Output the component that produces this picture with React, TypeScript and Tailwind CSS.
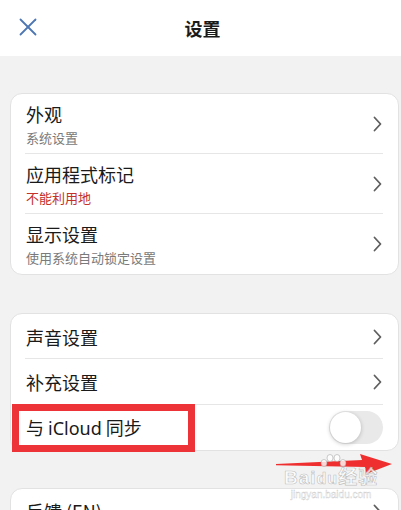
import React from "react";

const cjk = { fontFamily: '"Noto Sans CJK SC", "Noto Sans", sans-serif' };

function Chevron() {
  return (
    <svg width="9" height="16" viewBox="0 0 9 16" className="shrink-0">
      <polyline points="1.5,1.5 7.5,8 1.5,14.5" fill="none" stroke="#5f5f5f" strokeWidth="1.8" strokeLinecap="round" strokeLinejoin="round" />
    </svg>
  );
}

function Row2({ title, sub, subColor, last }: { title: string; sub: string; subColor: string; last?: boolean }) {
  return (
    <div className="relative flex h-[60px] items-center pl-[15px] pr-[16px]">
      <div className="flex flex-1 flex-col gap-[4px]">
        <div className="text-[18px] leading-[22px] text-[#1a1a1a]">{title}</div>
        <div className={`text-[13px] leading-[17px] ${subColor}`}>{sub}</div>
      </div>
      <Chevron />
      {!last && <div className="absolute bottom-0 left-[14px] right-[15px] h-px bg-[#e6e6e6]" />}
    </div>
  );
}

function Row1({ title, h }: { title: React.ReactNode; h: string }) {
  return (
    <div className={`relative flex items-center pl-[15px] pr-[16px] ${h}`}>
      <div className="flex-1 text-[18px] leading-[22px] text-[#1a1a1a]">{title}</div>
      <Chevron />
      <div className="absolute bottom-0 left-[14px] right-[15px] h-px bg-[#e6e6e6]" />
    </div>
  );
}

export default function App() {
  return (
    <div className="relative h-[510px] w-[401px] overflow-hidden bg-[#f2f2f2]" style={cjk}>
      <div className="relative flex h-[56px] items-center justify-center bg-white">
        <svg className="absolute left-[19px] top-[18px]" width="18" height="18" viewBox="0 0 18 18">
          <line x1="1.5" y1="1.5" x2="16.5" y2="16.5" stroke="#4d76b3" strokeWidth="1.8" strokeLinecap="round" />
          <line x1="16.5" y1="1.5" x2="1.5" y2="16.5" stroke="#4d76b3" strokeWidth="1.8" strokeLinecap="round" />
        </svg>
        <div className="ml-[4px] text-[18px] font-bold text-[#1a1a1a]">设置</div>
      </div>

      <div className="flex flex-col pt-[37px]">
        <div className="ml-[10px] mr-[2px] overflow-hidden rounded-[12px] border border-[#e2e2e2] bg-white">
          <Row2 title="外观" sub="系统设置" subColor="text-[#7a7a7a]" />
          <Row2 title="应用程式标记" sub="不能利用地" subColor="text-[#c4302a]" />
          <Row2 title="显示设置" sub="使用系统自动锁定设置" subColor="text-[#7a7a7a]" last />
        </div>

        <div className="ml-[10px] mr-[2px] mt-[38px] rounded-[12px] border border-[#e2e2e2] bg-white">
          <Row1 title="声音设置" h="h-[45px]" />
          <Row1 title="补充设置" h="h-[46px]" />
          <div className="relative flex h-[45px] items-center pl-[15px] pr-[15px]">
            <div className="flex-1 text-[18px] leading-[22px] text-[#1a1a1a]">
              与 <span style={{ fontFamily: '"Noto Sans", sans-serif' }}>iCloud</span> 同步
            </div>
            <div className="relative h-[33px] w-[54px] rounded-full bg-[#e9e9ea]">
              <div className="absolute left-[1px] top-[1px] h-[31px] w-[31px] rounded-full bg-white shadow-[0_1px_4px_rgba(0,0,0,0.22)]" />
            </div>
            <div className="absolute left-[1px] top-[-1px] h-[48px] w-[183px] border-[7px] border-[#ee3338]" />
          </div>
        </div>

        <div className="ml-[10px] mr-[2px] mt-[37px] rounded-[12px] border border-[#e2e2e2] bg-white">
          <div className="flex h-[46px] items-start pl-[15px] pr-[16px] pt-[11px]">
            <div className="flex-1 text-[18px] leading-[22px] text-[#1a1a1a]">反馈 (EN)</div>
            <div className="pt-[4px]">
              <Chevron />
            </div>
          </div>
        </div>
      </div>

      {/* red arrow */}
      <svg className="absolute left-[274px] top-[452px]" width="122" height="24" viewBox="0 0 122 24">
        <polygon points="2,12 88,8 86,2 118,12 92,22 91,15 2,13.2" fill="#ef2f2f" />
      </svg>
      {/* watermark */}
      <svg className="absolute left-[318px] top-[454px]" width="30" height="18" viewBox="0 0 30 18">
        <g fill="rgba(255,255,255,0.8)" stroke="rgba(150,150,150,0.6)" strokeWidth="0.8">
          <ellipse cx="6" cy="9" rx="3" ry="3.5" />
          <ellipse cx="12" cy="4" rx="3" ry="3.5" />
          <ellipse cx="19" cy="4" rx="3" ry="3.5" />
          <ellipse cx="25" cy="9" rx="3" ry="3.5" />
        </g>
      </svg>
      <div className="absolute left-[284px] top-[467px] flex flex-col items-center">
        <div
          className="text-[19px] font-bold leading-[21px] tracking-[1px] text-white/75"
          style={{ fontFamily: '"Liberation Sans", "Noto Sans CJK SC", sans-serif', WebkitTextStroke: "0.6px rgba(140,140,140,0.55)" }}
        >
          Bai<span className="text-[16px]">du</span>经验
        </div>
        <div
          className="text-[10px] leading-[12px] text-white/70"
          style={{ fontFamily: '"Liberation Sans", sans-serif', WebkitTextStroke: "0.4px rgba(150,150,150,0.5)" }}
        >
          jingyan.baidu.com
        </div>
      </div>
    </div>
  );
}
